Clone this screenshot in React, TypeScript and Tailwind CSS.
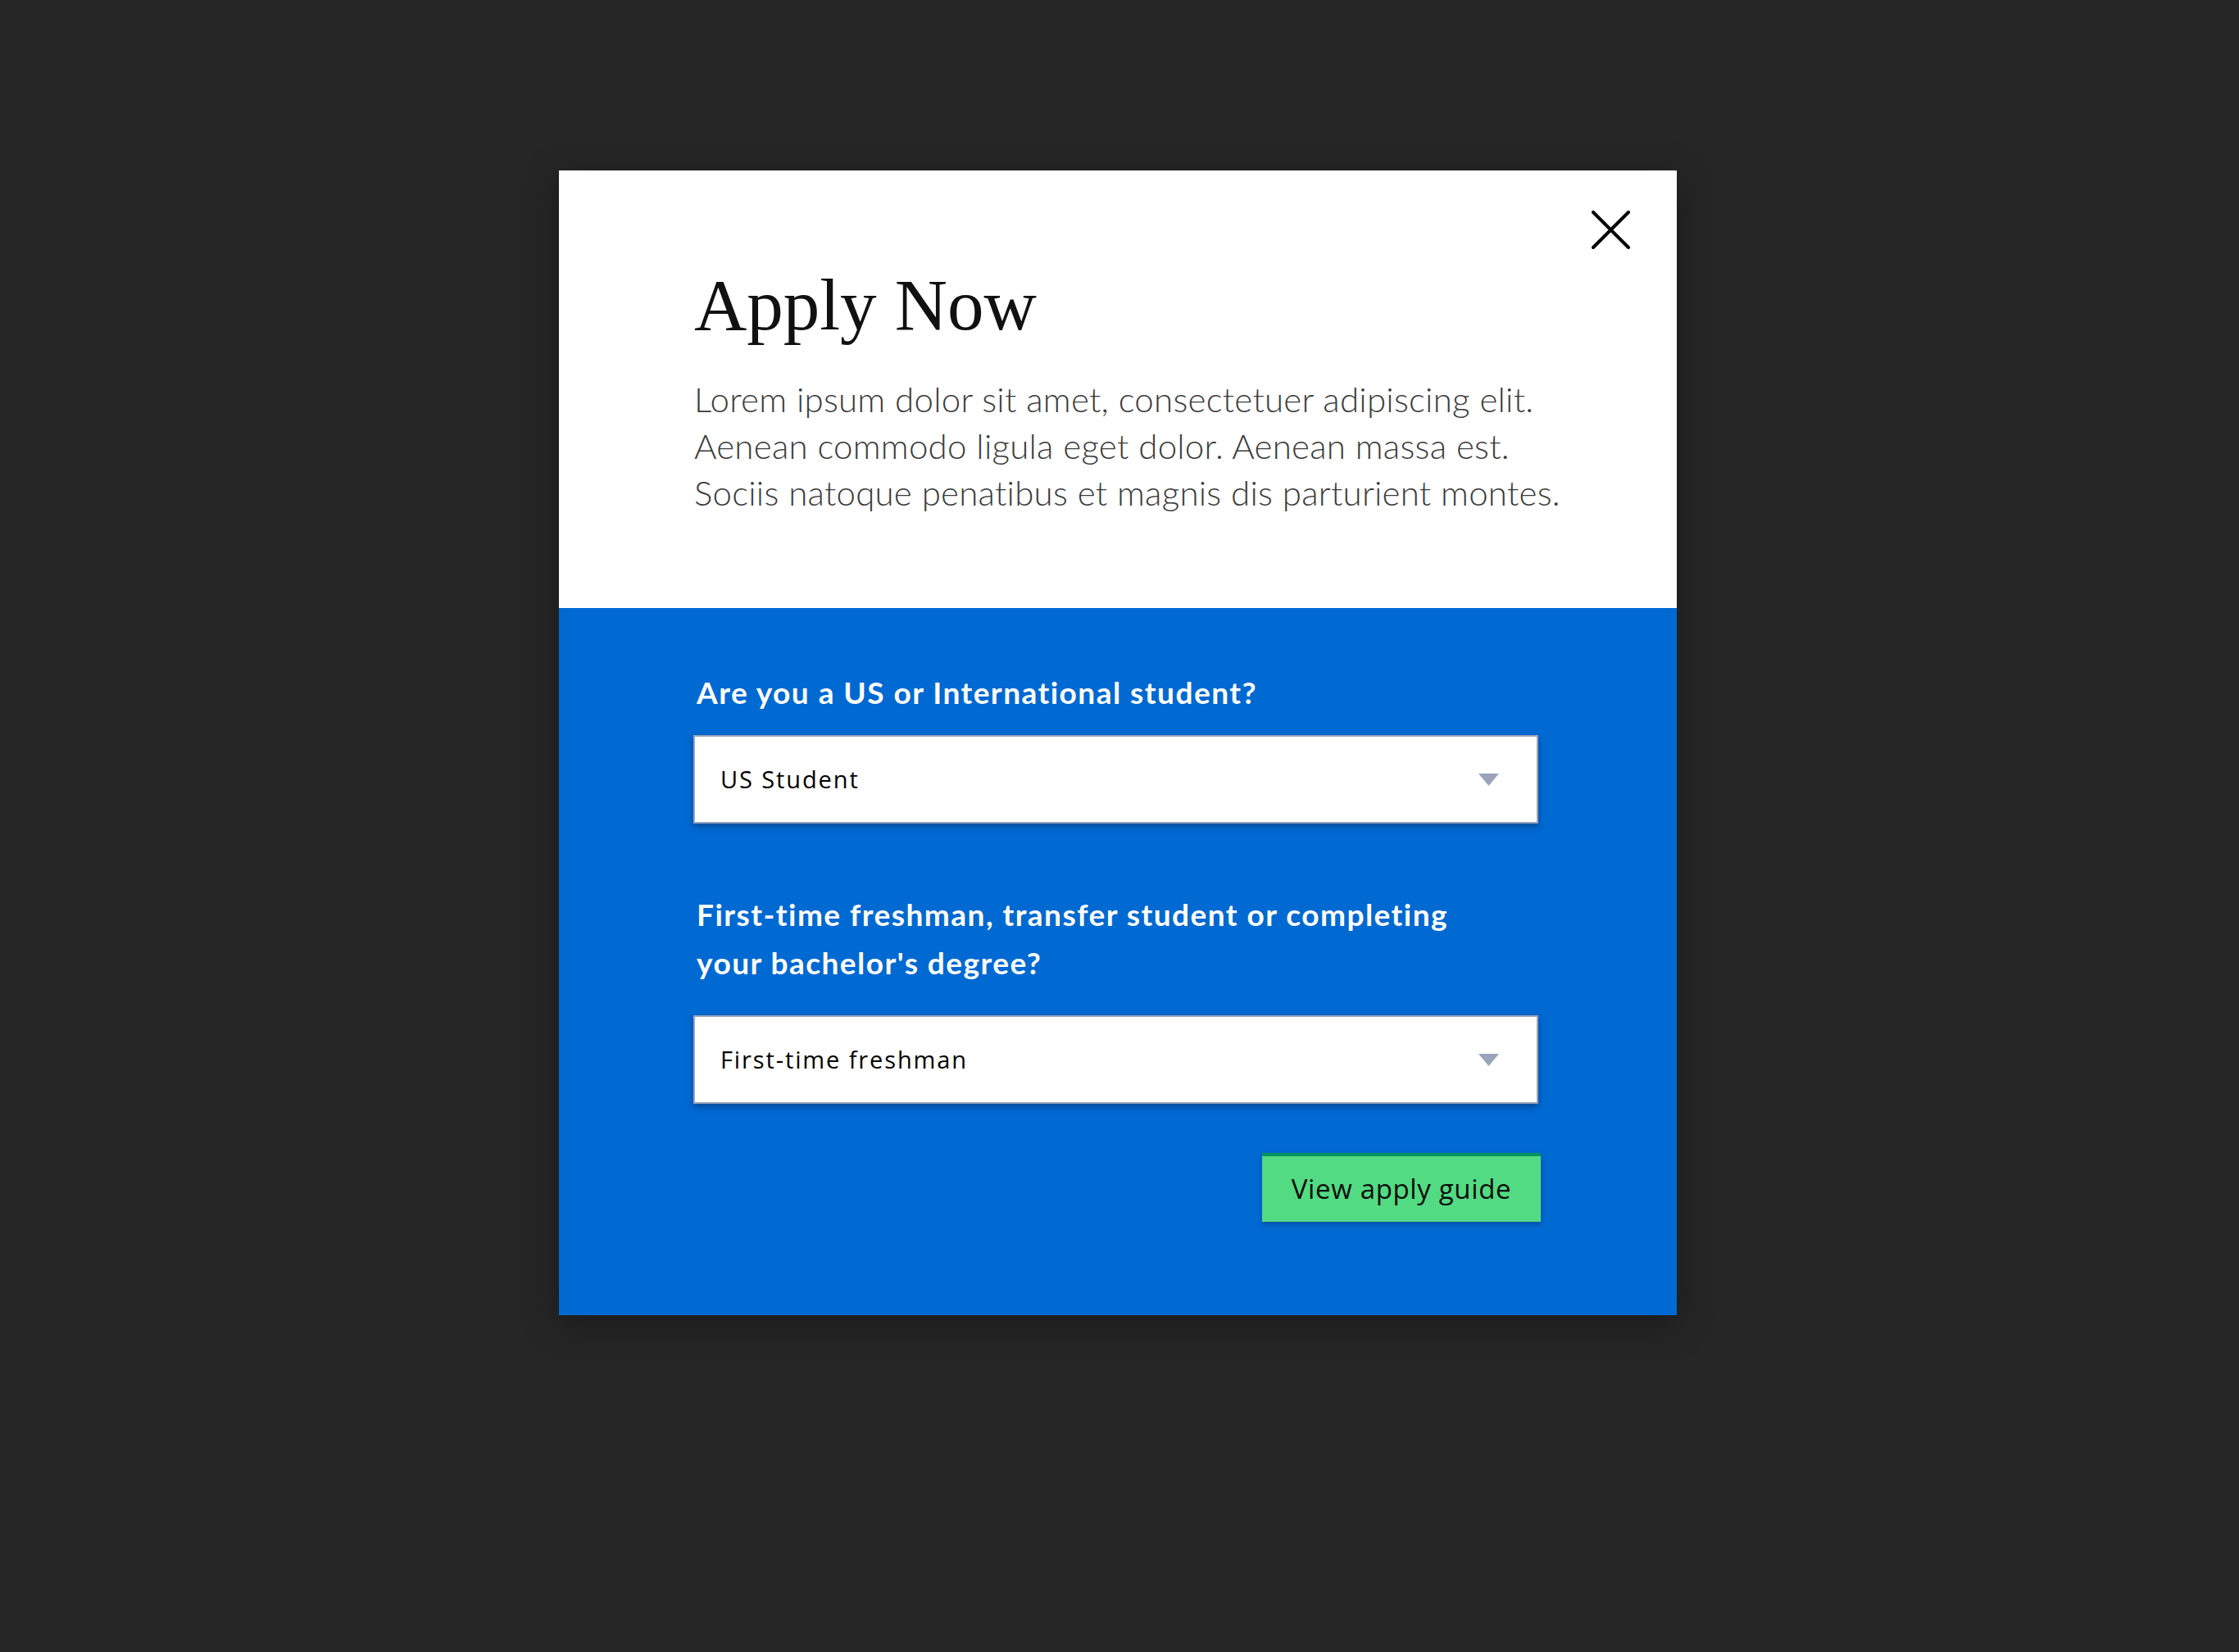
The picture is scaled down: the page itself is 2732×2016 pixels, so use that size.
import React from "react";

function Caret() {
  return (
    <svg width="25" height="15" viewBox="0 0 25 15" className="shrink-0">
      <polygon points="0,0 25,0 12.5,15" fill="#9aa3bb" />
    </svg>
  );
}

function SelectBox({ value }: { value: string }) {
  return (
    <div className="w-[1031px] h-[108px] bg-white border-2 border-[#9aa3bb] shadow-[0_4px_8px_rgba(0,0,0,0.28)] flex items-center justify-between pl-[31px] pr-[46px]">
      <span className="text-[29px] tracking-[0.065em] text-black" style={{ fontFamily: '"Open Sans", "Noto Sans", sans-serif' }}>
        {value}
      </span>
      <Caret />
    </div>
  );
}

export default function App() {
  return (
    <div className="w-[2732px] h-[2016px] bg-[#262626] overflow-hidden pt-[208px]">
      <div className="relative ml-[682px] w-[1364px] shadow-[0_10px_40px_rgba(0,0,0,0.35)]">
        <button className="absolute right-[57px] top-[49px] w-[47px] h-[47px]" aria-label="Close">
          <svg width="47" height="47" viewBox="0 0 47 47">
            <path d="M2 2 L45 45 M45 2 L2 45" stroke="#000" strokeWidth="4" strokeLinecap="round" />
          </svg>
        </button>
        <div className="bg-white pl-[165px] pt-[120px] pb-[112px]">
          <h1 className="text-[89px] leading-[89px] text-[#111]" style={{ fontFamily: '"Liberation Serif", serif' }}>
            Apply Now
          </h1>
          <p className="mt-[42px] text-[42px] leading-[57px] tracking-[0.006em] text-[#3b3b3b] font-light" style={{ fontFamily: 'Lato, "Open Sans", sans-serif' }}>
            Lorem ipsum dolor sit amet, consectetuer adipiscing elit.
            <br />
            Aenean commodo ligula eget dolor. Aenean massa est.
            <br />
            Sociis natoque penatibus et magnis dis parturient montes.
          </p>
        </div>
        <div className="bg-[#0069d2] pl-[164px] pt-[73px] pb-[114px]" style={{ fontFamily: 'Lato, "Open Sans", sans-serif' }}>
          <div className="w-[1034px] flex flex-col">
            <label className="pl-[4px] text-[37px] leading-[59px] tracking-[0.04em] font-bold text-white">
              Are you a US or International student?
            </label>
            <div className="mt-[23px]">
              <SelectBox value="US Student" />
            </div>
            <label className="mt-[81px] pl-[4px] text-[37px] leading-[59px] tracking-[0.04em] font-bold text-white">
              First-time freshman, transfer student or completing
              <br />
              your bachelor's degree?
            </label>
            <div className="mt-[35px]">
              <SelectBox value="First-time freshman" />
            </div>
            <div className="mt-[60px] flex justify-end">
              <button
                className="w-[340px] h-[84px] bg-[#52db82] border-t-4 border-[#009460] shadow-[0_3px_6px_rgba(0,0,0,0.25)] flex items-center justify-center text-[33px] tracking-[0.02em] text-[#0b0b0b]"
                style={{ fontFamily: '"Open Sans", "Noto Sans", sans-serif' }}
              >
                View apply guide
              </button>
            </div>
          </div>
        </div>
      </div>
    </div>
  );
}
